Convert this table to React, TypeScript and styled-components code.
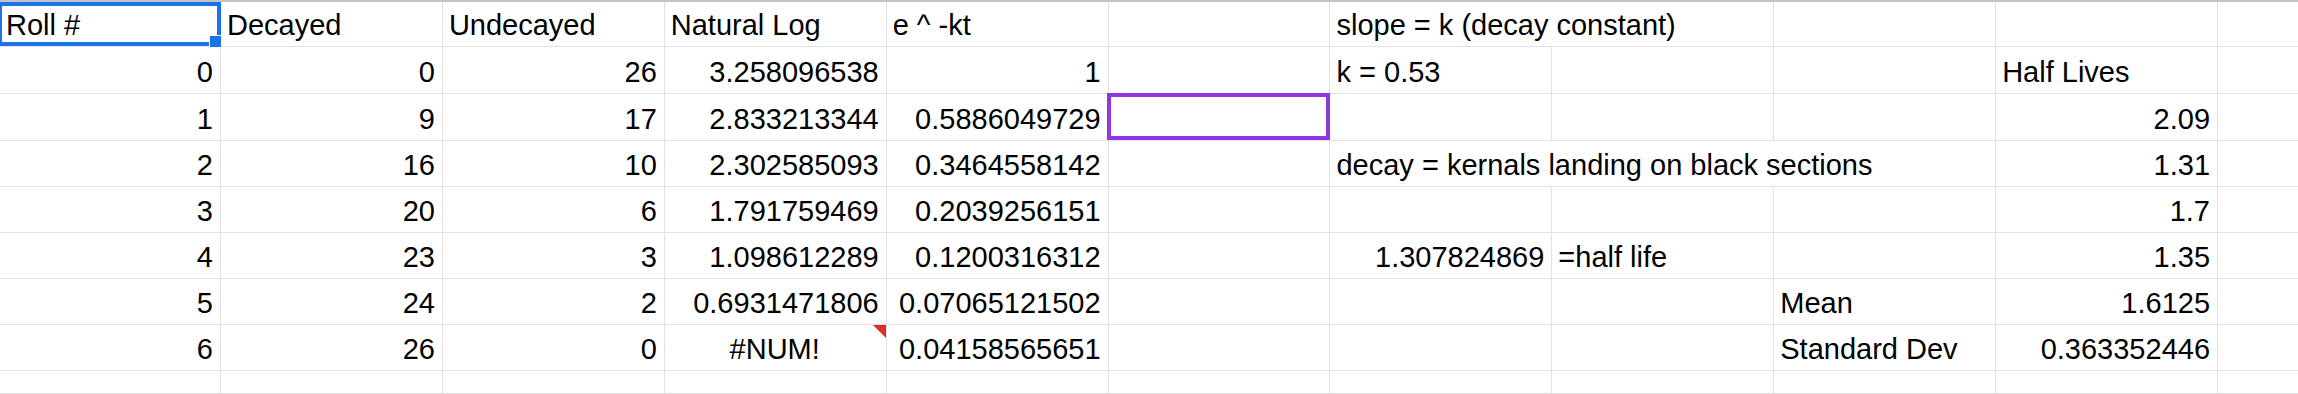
import React from 'react';
import styled, { createGlobalStyle } from 'styled-components';

const GlobalStyle = createGlobalStyle`
	html, body {
		margin: 0;
		padding: 0;
		background: #ffffff;
		overflow: hidden;
	}
`;

const Sheet = styled.div`
	display: grid;
	grid-template-columns: 221px repeat(10, 221.9px);
	grid-template-rows: 45px 47px 47px 46px 46px 46px 46px 46px 1fr;
	width: 2298px;
	height: 394px;
	box-sizing: border-box;
	overflow: hidden;
	border-top: 2px solid #c4c4c4;
	font-family: 'Liberation Sans', Arial, sans-serif;
	font-size: 29px;
	color: #000000;
`;

const Cell = styled.div<{ $align: string; $span: number }>`
	position: relative;
	grid-column: span ${(p) => p.$span};
	display: flex;
	align-items: flex-end;
	justify-content: ${(p) =>
		p.$align === 'right' ? 'flex-end' : p.$align === 'center' ? 'center' : 'flex-start'};
	padding: 0 7px 5px 6px;
	line-height: 32px;
	white-space: nowrap;
	border-right: 1px solid #e1e1e1;
	border-bottom: 1px solid #e1e1e1;
	box-sizing: border-box;
`;

// blue frame of the active cell
const SelectionFrame = styled.div`
	position: absolute;
	top: 0;
	left: -2px;
	right: -1px;
	bottom: 0;
	border: 4px solid #1a73e8;
	z-index: 2;
	pointer-events: none;
`;

const FillHandle = styled.div`
	position: absolute;
	right: -5px;
	bottom: -6px;
	width: 11px;
	height: 11px;
	background: #1a73e8;
	border: 1px solid #ffffff;
	z-index: 3;
`;

// collaborator cursor
const PeerFrame = styled.div<{ $color: string }>`
	position: absolute;
	top: -1px;
	left: -2px;
	right: -1px;
	bottom: 0;
	border: 4px solid ${(p) => p.$color};
	z-index: 2;
`;

const ErrorMark = styled.div`
	position: absolute;
	top: 0;
	right: 0;
	width: 0;
	height: 0;
	border-top: 13px solid #d93025;
	border-left: 13px solid transparent;
`;

type Spec =
	| string
	| {
			v?: string;
			span?: number;
			align?: 'left' | 'right' | 'center';
			mark?: 'select' | 'peer' | 'error';
	  };

const rows: Spec[][] = [
	[
		{ v: 'Roll #', mark: 'select' },
		'Decayed',
		'Undecayed',
		'Natural Log',
		'e ^ -kt',
		'',
		{ v: 'slope = k (decay constant)', span: 2 },
		'',
		'',
		'',
	],
	['0', '0', '26', '3.258096538', '1', '', 'k = 0.53', '', '', 'Half Lives', ''],
	['1', '9', '17', '2.833213344', '0.5886049729', { mark: 'peer' }, '', '', '', '2.09', ''],
	[
		'2',
		'16',
		'10',
		'2.302585093',
		'0.3464558142',
		'',
		{ v: 'decay = kernals landing on black sections', span: 3 },
		'1.31',
		'',
	],
	['3', '20', '6', '1.791759469', '0.2039256151', '', '', '', '', '1.7', ''],
	['4', '23', '3', '1.098612289', '0.1200316312', '', '1.307824869', '=half life', '', '1.35', ''],
	['5', '24', '2', '0.6931471806', '0.07065121502', '', '', '', 'Mean', '1.6125', ''],
	[
		'6',
		'26',
		'0',
		{ v: '#NUM!', align: 'center', mark: 'error' },
		'0.04158565651',
		'',
		'',
		'',
		'Standard Dev',
		'0.363352446',
		'',
	],
	['', '', '', '', '', '', '', '', '', '', ''],
];

const isNumber = (v: string) => /^-?\d+(\.\d+)?$/.test(v);

const App: React.FC = () => {
	return (
		<>
			<GlobalStyle />
			<Sheet>
				{rows.map((row, r) =>
					row.map((spec, c) => {
						const s = typeof spec === 'string' ? { v: spec } : spec;
						const v = s.v || '';
						const align = s.align || (isNumber(v) ? 'right' : 'left');
						return (
							<Cell key={`${r}-${c}`} $align={align} $span={s.span || 1}>
								{v}
								{s.mark === 'select' && (
									<SelectionFrame>
										<FillHandle />
									</SelectionFrame>
								)}
								{s.mark === 'peer' && <PeerFrame $color='#9334e6' />}
								{s.mark === 'error' && <ErrorMark />}
							</Cell>
						);
					})
				)}
			</Sheet>
		</>
	);
};

export default App;
